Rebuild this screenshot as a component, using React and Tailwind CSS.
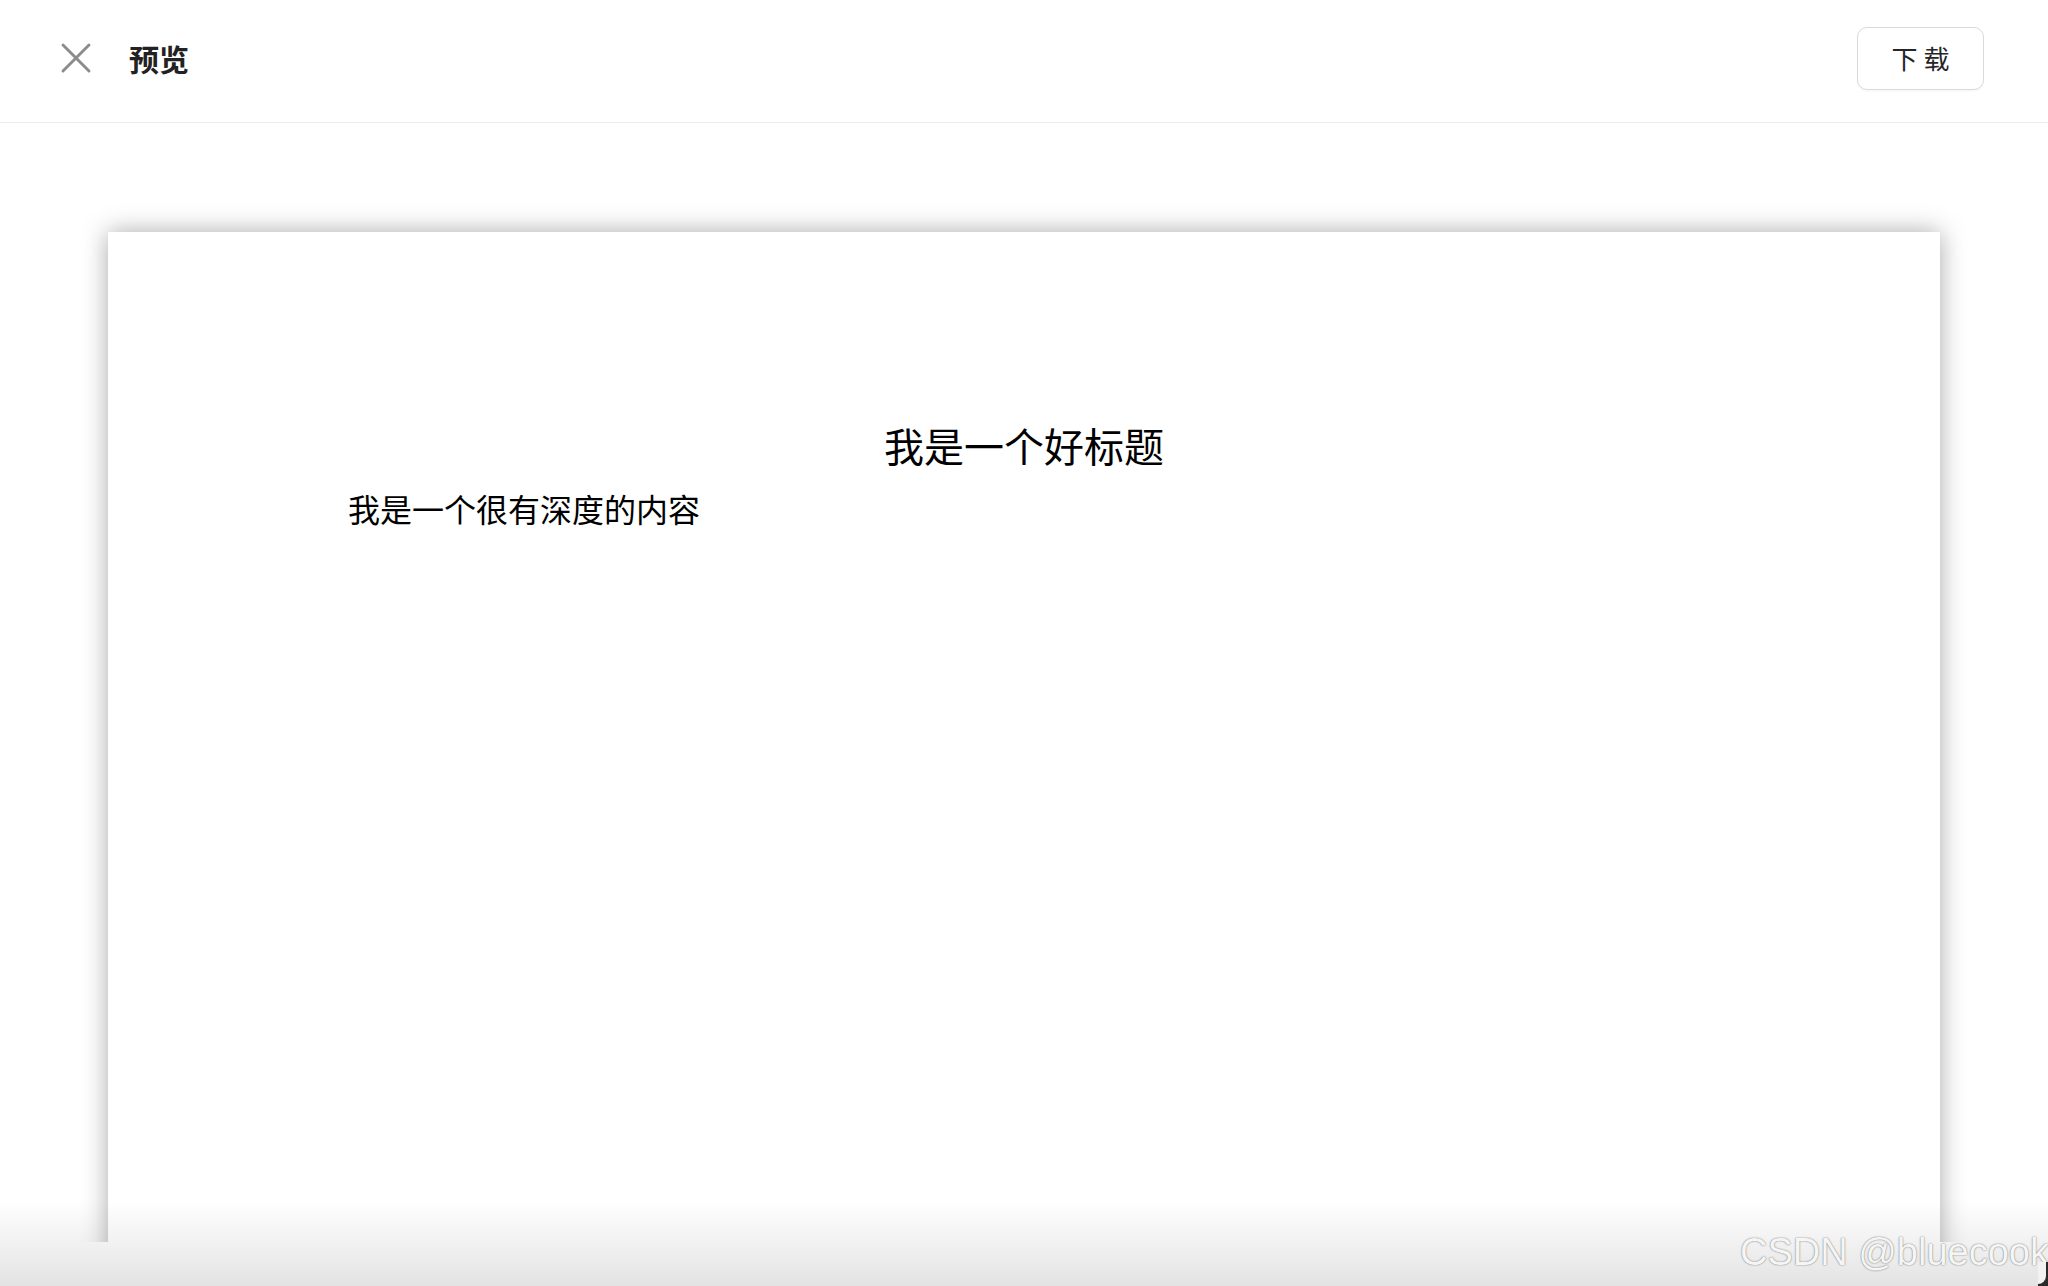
import { X } from "lucide-react";

const cjk = "font-['PingFang_SC','Noto_Sans_CJK_SC',sans-serif]";

function Header() {
  return (
    <div className="flex items-center justify-between h-[123px] border-b border-[#ededed] pl-[50px] pr-[64px] pb-[6px]">
      <div className="flex items-center gap-[27px]">
        <X size={52} strokeWidth={1.35} className="text-[#8c8c8c]" />
        <span className={`${cjk} text-[30px] font-bold text-[#222] leading-none`}>预览</span>
      </div>
      <button className={`${cjk} w-[127px] h-[63px] rounded-[10px] border-[1.5px] border-[#d9d9d9] bg-white text-[26px] text-[#262626] leading-none shadow-[0_2px_0_rgba(0,0,0,0.02)]`}>
        下 载
      </button>
    </div>
  );
}

function Page() {
  return (
    <div className="bg-white h-[1200px] shadow-[0_0_24px_rgba(0,0,0,0.34)] pt-[193px] px-[240px]">
      <h1 className={`${cjk} text-center text-[40px] leading-none text-black`}>我是一个好标题</h1>
      <p className={`${cjk} mt-[27px] text-[32px] leading-none text-black`}>我是一个很有深度的内容</p>
    </div>
  );
}

export default function App() {
  return (
    <div className="relative w-full h-[1286px] overflow-hidden bg-white">
      <Header />
      <div className="h-[1119px] overflow-hidden pt-[109px] px-[108px]">
        <Page />
      </div>

      {/* bottom shading from the screenshot */}
      <div className="absolute left-0 right-0 bottom-0 h-[86px] bg-gradient-to-b from-transparent to-[rgba(0,0,0,0.11)] pointer-events-none" />

      {/* watermark */}
      <div className="absolute top-[1233px] left-[1740px] font-['Liberation_Sans',Arial,sans-serif] text-[38px] leading-none text-[#f5f5f5] whitespace-nowrap [text-shadow:0_0_1.5px_rgba(0,0,0,0.65)]">
        CSDN @bluecook
      </div>

      <div className="absolute right-0 bottom-0 w-[10px] h-[24px] bg-[#2a2a2a]">
        <div className="w-[8px] h-[22px] bg-[#f2f2f2] rounded-br-[10px]" />
      </div>
    </div>
  );
}
